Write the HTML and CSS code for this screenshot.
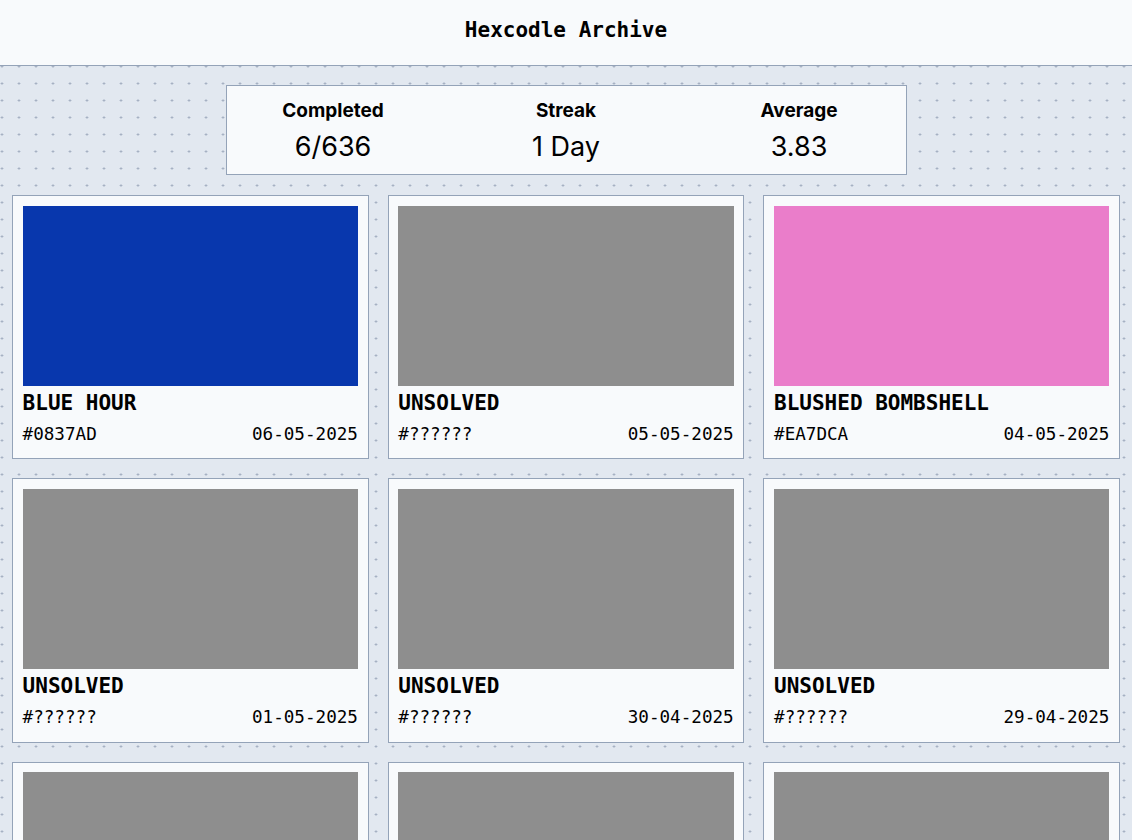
FILE: index.html
```html
<!DOCTYPE html>
<html lang="en">
<head>
<meta charset="utf-8">
<title>Hexcodle Archive</title>
<link rel="stylesheet" href="styles.css">
</head>
<body>
<header class="top">
  <h1 class="brand">Hexcodle Archive</h1>
</header>
<main class="page">
  <section class="stats">
    <div class="stat"><div class="stat-label">Completed</div><div class="stat-value">6/636</div></div>
    <div class="stat"><div class="stat-label">Streak</div><div class="stat-value">1 Day</div></div>
    <div class="stat"><div class="stat-label">Average</div><div class="stat-value">3.83</div></div>
  </section>
  <section class="grid">
    <article class="card">
      <div class="swatch" style="background:#0837AD"></div>
      <h2 class="name">BLUE HOUR</h2>
      <div class="meta"><span>#0837AD</span><span>06-05-2025</span></div>
    </article>
    <article class="card">
      <div class="swatch unsolved"></div>
      <h2 class="name">UNSOLVED</h2>
      <div class="meta"><span>#??????</span><span>05-05-2025</span></div>
    </article>
    <article class="card">
      <div class="swatch" style="background:#EA7DCA"></div>
      <h2 class="name">BLUSHED BOMBSHELL</h2>
      <div class="meta"><span>#EA7DCA</span><span>04-05-2025</span></div>
    </article>
    <article class="card">
      <div class="swatch unsolved"></div>
      <h2 class="name">UNSOLVED</h2>
      <div class="meta"><span>#??????</span><span>01-05-2025</span></div>
    </article>
    <article class="card">
      <div class="swatch unsolved"></div>
      <h2 class="name">UNSOLVED</h2>
      <div class="meta"><span>#??????</span><span>30-04-2025</span></div>
    </article>
    <article class="card">
      <div class="swatch unsolved"></div>
      <h2 class="name">UNSOLVED</h2>
      <div class="meta"><span>#??????</span><span>29-04-2025</span></div>
    </article>
    <article class="card">
      <div class="swatch unsolved"></div>
    </article>
    <article class="card">
      <div class="swatch unsolved"></div>
    </article>
    <article class="card">
      <div class="swatch unsolved"></div>
    </article>
  </section>
</main>
</body>
</html>
```
FILE: styles.css
```css
* { box-sizing: border-box; }
html, body { margin: 0; padding: 0; }
body {
  background: #e2e8f0;
  color: #000;
  font-family: "DejaVu Sans Mono", monospace;
}
.top {
  height: 66px;
  background: #f8fafc;
  border-bottom: 1px solid #94a3b8;
  display: flex;
  align-items: center;
  justify-content: center;
}
.brand {
  margin: 0;
  font-family: "DejaVu Sans Mono", monospace;
  font-weight: 700;
  font-size: 21px;
  padding-bottom: 6px;
}
.page {
  padding: 19px 12px;
  background-color: #e2e8f0;
  background-image: radial-gradient(circle, #9aa6b9 0.9px, transparent 1.2px);
  background-size: 17px 17px;
  background-position: -6.5px -8px;
  min-height: 774px;
}
.stats {
  width: 681px;
  margin: 0 auto 20px;
  background: #f8fafc;
  border: 1px solid #94a3b8;
  display: grid;
  grid-template-columns: repeat(3, 1fr);
  column-gap: 20px;
  padding: 13px 0 11px;
  font-family: Inter, "Noto Sans", sans-serif;
  text-align: center;
}
.stat { display: flex; flex-direction: column; align-items: center; gap: 8px; }
.stat-label { font-size: 19px; font-weight: 700; }
.stat-value { font-size: 27px; font-weight: 400; }
.grid {
  display: grid;
  grid-template-columns: repeat(3, 1fr);
  gap: 19.2px;
}
.card {
  background: #f8fafc;
  border: 1px solid #94a3b8;
  padding: 9.6px 9.6px 13.6px;
  display: flex;
  flex-direction: column;
}
.swatch { height: 180px; }
.swatch.unsolved { background: #8e8e8e; }
.name {
  margin: 5px 0 0;
  font-size: 21px;
  font-weight: 700;
  line-height: 24px;
}
.meta {
  margin-top: 9px;
  display: flex;
  justify-content: space-between;
  font-size: 17.6px;
  line-height: 21px;
}
```
